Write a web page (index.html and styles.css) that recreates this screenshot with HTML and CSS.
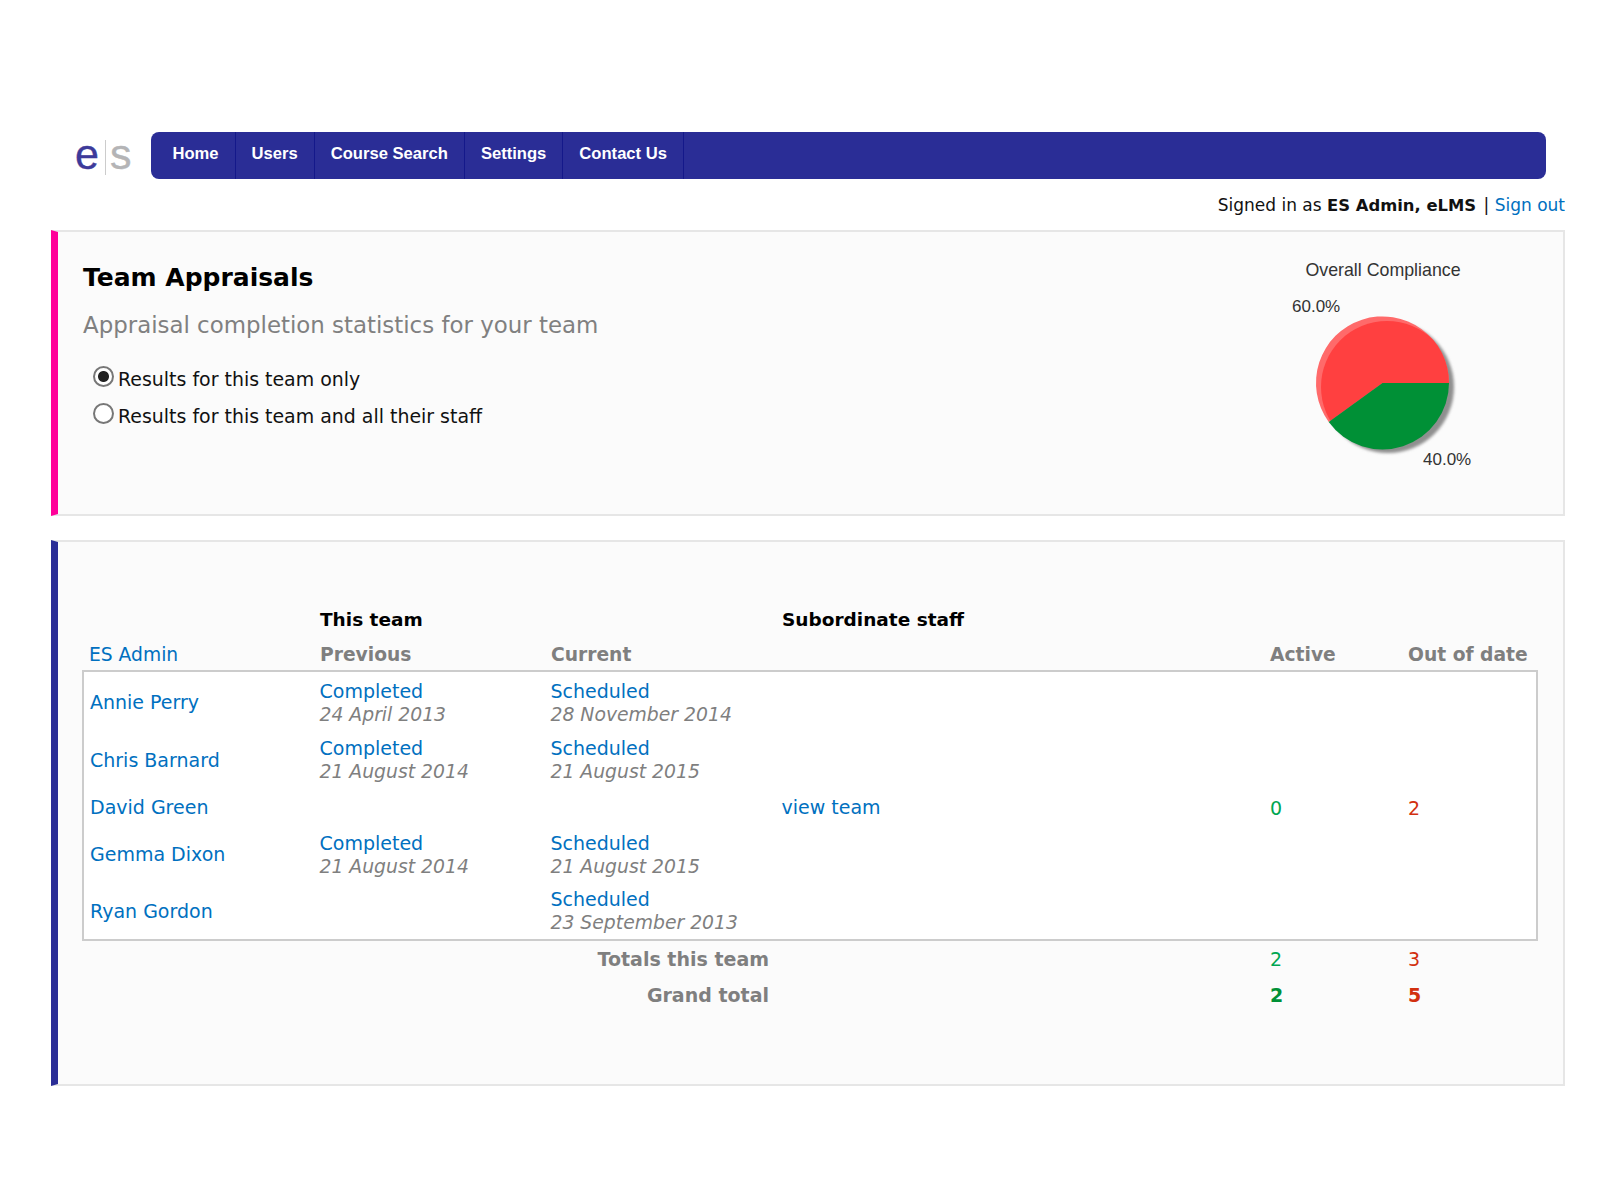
FILE: index.html
```html
<!DOCTYPE html>
<html lang="en">
<head>
<meta charset="utf-8">
<title>Team Appraisals</title>
<link rel="stylesheet" href="styles.css">
</head>
<body>
<div class="page">
  <header class="top">
    <div class="logo"><span class="logo-e">e</span><span class="logo-bar"></span><span class="logo-s">s</span></div>
    <nav class="nav">
      <a class="nav-item nav-first">Home</a>
      <a class="nav-item">Users</a>
      <a class="nav-item">Course Search</a>
      <a class="nav-item">Settings</a>
      <a class="nav-item">Contact Us</a>
    </nav>
  </header>
  <div class="signed">Signed in as <b>ES Admin, eLMS</b> | <a class="link">Sign out</a></div>
  <section class="panel panel-pink">
    <div class="intro">
      <h1>Team Appraisals</h1>
      <p class="sub">Appraisal completion statistics for your team</p>
      <div class="radio-row"><span class="radio radio-on"></span><span>Results for this team only</span></div>
      <div class="radio-row"><span class="radio"></span><span>Results for this team and all their staff</span></div>
    </div>
    <svg class="chart" width="220" height="240" viewBox="0 0 220 240">
      <defs>
        <filter id="sh" x="-20%" y="-20%" width="140%" height="140%"><feGaussianBlur stdDeviation="1.6"/></filter>
        <clipPath id="redslice"><path d="M110.5 135 L177 135 A66.5 66.5 0 1 0 56.7 174 Z"/></clipPath>
      </defs>
      <text x="111" y="28" text-anchor="middle" class="chart-t">Overall Compliance</text>
      <text x="20" y="64" class="chart-l">60.0%</text>
      <text x="151" y="217" class="chart-l">40.0%</text>
      <circle cx="116" cy="139" r="66" fill="#8f8f8f" filter="url(#sh)"/>
      <path d="M110.5 135 L177 135 A66.5 66.5 0 1 0 56.7 174 Z" fill="#ff6a6a"/>
      <circle cx="115" cy="139" r="66" fill="#ff4040" clip-path="url(#redslice)"/>
      <path d="M110.5 135 L177 135 A66.5 66.5 0 0 1 56.7 174 Z" fill="#009036"/>
    </svg>
  </section>
  <section class="panel panel-blue">
    <div class="grid head-a"><span></span><b>This team</b><span></span><b>Subordinate staff</b><span></span><span></span></div>
    <div class="grid head-b"><a class="link">ES Admin</a><b>Previous</b><b>Current</b><span></span><b>Active</b><b>Out of date</b></div>
    <div class="box">
      <div class="grid row"><a class="link">Annie Perry</a><div><a class="link">Completed</a><i>24 April 2013</i></div><div><a class="link">Scheduled</a><i>28 November 2014</i></div><span></span><span></span><span></span></div>
      <div class="grid row"><a class="link">Chris Barnard</a><div><a class="link">Completed</a><i>21 August 2014</i></div><div><a class="link">Scheduled</a><i>21 August 2015</i></div><span></span><span></span><span></span></div>
      <div class="grid row row-short"><a class="link">David Green</a><span></span><span></span><a class="link">view team</a><span class="good">0</span><span class="bad">2</span></div>
      <div class="grid row"><a class="link">Gemma Dixon</a><div><a class="link">Completed</a><i>21 August 2014</i></div><div><a class="link">Scheduled</a><i>21 August 2015</i></div><span></span><span></span><span></span></div>
      <div class="grid row row-last"><a class="link">Ryan Gordon</a><span></span><div><a class="link">Scheduled</a><i>23 September 2013</i></div><span></span><span></span><span></span></div>
    </div>
    <div class="grid total"><b class="total-label">Totals this team</b><span class="good">2</span><span class="bad">3</span></div>
    <div class="grid total"><b class="total-label">Grand total</b><b class="good">2</b><b class="bad">5</b></div>
  </section>
</div>
</body>
</html>
```
FILE: styles.css
```css
* { box-sizing: border-box; }
html, body { margin: 0; background: #fff; }
body { font-family: "DejaVu Sans", Verdana, sans-serif; font-size: 19px; color: #111; }
.page { padding: 132px 35px 0 51px; }
.top { display: flex; align-items: center; margin-right: 19px; }
.logo { width: 100px; height: 46.5px; flex: none; display: flex; align-items: center; padding: 0 0 2px 24px; font: 43px/46px "Liberation Sans", sans-serif; -webkit-text-stroke: 0.4px; }
.logo-e { color: #3d3a9a; }
.logo-bar { width: 1px; height: 35px; background: #ccc; margin: 6px 4px 0 6px; }
.logo-s { color: #b4b4b6; }
.nav { flex: 1; display: flex; height: 46.5px; background: #2a2d96; border-radius: 8px; }
.nav-item { display: flex; align-items: center; padding: 0 16px 3px; color: #fff; font: bold 16.6px "Liberation Sans", sans-serif; border-right: 1px solid #14188a; }
.nav-first { padding-left: 21.5px; }
.signed { text-align: right; font-size: 17px; height: 51.5px; padding-top: 16px; line-height: 20px; }
.signed b { font-size: 16.4px; margin-right: 2px; }
.link { color: #0070c0; }
.panel { background: #fbfbfb; border: 2px solid #e6e6e6; border-left: 7px solid; }
.panel-pink { border-left-color: #ff0099; height: 286px; margin-bottom: 24px; display: flex; justify-content: space-between; padding: 0 71px 0 25px; }
.panel-blue { border-left-color: #2a2d96; height: 546px; padding: 60px 25px 0 24px; }
h1 { margin: 30px 0 0; font-size: 25px; line-height: 32px; font-weight: bold; color: #000; }
.sub { margin: 17px 0 22px; font-size: 22.9px; line-height: 28px; color: #808080; }
.radio-row { display: flex; align-items: center; gap: 4px; height: 36.5px; padding-left: 10px; font-size: 18.95px; }
.radio { width: 21px; height: 21px; border: 2px solid #777; border-radius: 50%; background: #fff; margin-top: -5px; flex: none; }
.radio-on { background: radial-gradient(circle, #222 0 5px, #fff 6px); }
.chart { flex: none; margin-top: 16px; }
.chart-t, .chart-l { font-family: "Liberation Sans", sans-serif; fill: #333; }
.chart-t { font-size: 17.8px; }
.chart-l { font-size: 17px; }
.grid { display: grid; grid-template-columns: 232px 231px 231px 488px 138px 1fr; align-items: center; padding-left: 6px; }
.head-a { height: 34px; }
.head-a b { color: #000; font-size: 18.5px; }
.head-b { height: 34px; padding: 2px 0 0 7px; grid-template-columns: 231px 231px 231px 488px 138px 1fr; font-size: 18.7px; }
.head-b b { color: #7f7f7f; }
.box { background: #fff; border: 2px solid #ccc; padding-top: 2px; }
.box .grid { padding-left: 6px; grid-template-columns: 229.5px 231px 231px 488.5px 138px 1fr; }
.row { height: 57.5px; }
.box .row-short { height: 37px; }
.box .row-last { height: 55.5px; }
.row i { display: block; color: #7f7f7f; line-height: 23px; font-size: 18.8px; }
.row .link { line-height: 23px; display: block; }
.total { height: 36px; grid-template-columns: 681px 501px 138px 1fr; }
.total-label { color: #7f7f7f; text-align: right; }
.total > :nth-child(2) { grid-column: 3; }
.good { color: #00a651; }
.bad { color: #d2300f; }
b.good { color: #009036; }
```
